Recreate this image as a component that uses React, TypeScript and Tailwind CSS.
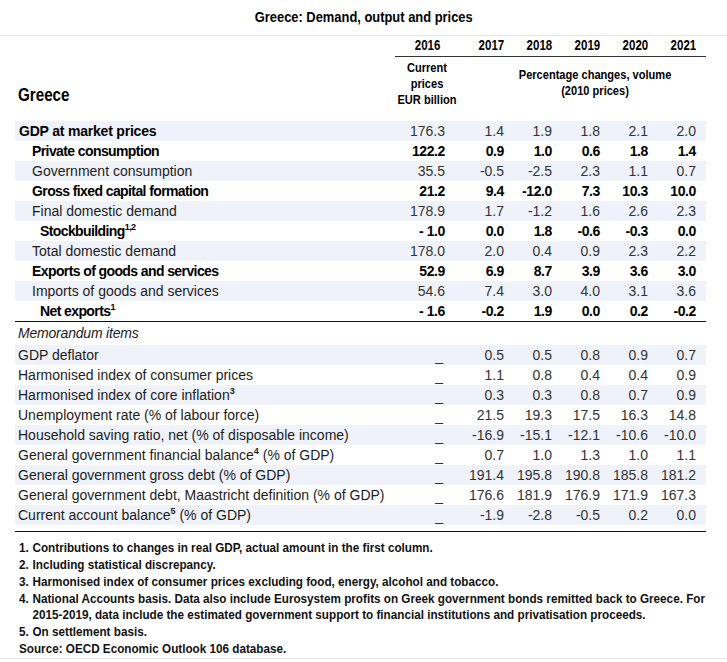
import React from "react";

type Row = {
  label: React.ReactNode;
  indent: number;
  bold?: boolean;
  heavy?: boolean;
  values: string[];
};

// Arial Narrow look: Liberation Sans bold, squeezed horizontally
const narrow = "[font-family:'Liberation_Sans',Arial,sans-serif] font-bold";
const body = "[font-family:'Liberation_Sans',Arial,sans-serif]";

const Squeeze = ({
  children,
  origin = "left",
  wide = false,
}: {
  children: React.ReactNode;
  origin?: "left" | "center";
  wide?: boolean;
}) => (
  <span
    className={`inline-block whitespace-nowrap ${wide ? "scale-x-[0.9]" : "scale-x-[0.82]"} ${
      origin === "left" ? "origin-left" : "origin-center"
    }`}
  >
    {children}
  </span>
);

const Sup = ({ children }: { children: React.ReactNode }) => (
  <sup className="relative -top-[6px] text-[9px] font-bold leading-none">{children}</sup>
);

const mainRows: Row[] = [
  { label: "GDP at market prices", indent: 4, bold: true, values: ["176.3", "1.4", "1.9", "1.8", "2.1", "2.0"] },
  { label: "Private consumption", indent: 17, heavy: true, values: ["122.2", "0.9", "1.0", "0.6", "1.8", "1.4"] },
  { label: "Government consumption", indent: 17, values: ["35.5", "-0.5", "-2.5", "2.3", "1.1", "0.7"] },
  { label: "Gross fixed capital formation", indent: 17, heavy: true, values: ["21.2", "9.4", "-12.0", "7.3", "10.3", "10.0"] },
  { label: "Final domestic demand", indent: 17, values: ["178.9", "1.7", "-1.2", "1.6", "2.6", "2.3"] },
  {
    label: (
      <>
        Stockbuilding<Sup>1,2</Sup>
      </>
    ),
    indent: 25,
    heavy: true,
    values: ["- 1.0", "0.0", "1.8", "-0.6", "-0.3", "0.0"],
  },
  { label: "Total domestic demand", indent: 17, values: ["178.0", "2.0", "0.4", "0.9", "2.3", "2.2"] },
  { label: "Exports of goods and services", indent: 17, heavy: true, values: ["52.9", "6.9", "8.7", "3.9", "3.6", "3.0"] },
  { label: "Imports of goods and services", indent: 17, values: ["54.6", "7.4", "3.0", "4.0", "3.1", "3.6"] },
  {
    label: (
      <>
        Net exports<Sup>1</Sup>
      </>
    ),
    indent: 25,
    heavy: true,
    values: ["- 1.6", "-0.2", "1.9", "0.0", "0.2", "-0.2"],
  },
];

const memoRows: Row[] = [
  { label: "GDP deflator", indent: 3, values: ["_", "0.5", "0.5", "0.8", "0.9", "0.7"] },
  { label: "Harmonised index of consumer prices", indent: 3, values: ["_", "1.1", "0.8", "0.4", "0.4", "0.9"] },
  {
    label: (
      <>
        Harmonised index of core inflation<Sup>3</Sup>
      </>
    ),
    indent: 3,
    values: ["_", "0.3", "0.3", "0.8", "0.7", "0.9"],
  },
  { label: "Unemployment rate (% of labour force)", indent: 3, values: ["_", "21.5", "19.3", "17.5", "16.3", "14.8"] },
  { label: "Household saving ratio, net (% of disposable income)", indent: 3, values: ["_", "-16.9", "-15.1", "-12.1", "-10.6", "-10.0"] },
  {
    label: (
      <>
        General government financial balance<Sup>4</Sup> (% of GDP)
      </>
    ),
    indent: 3,
    values: ["_", "0.7", "1.0", "1.3", "1.0", "1.1"],
  },
  { label: "General government gross debt (% of GDP)", indent: 3, values: ["_", "191.4", "195.8", "190.8", "185.8", "181.2"] },
  { label: "General government debt, Maastricht definition (% of GDP)", indent: 3, values: ["_", "176.6", "181.9", "176.9", "171.9", "167.3"] },
  {
    label: (
      <>
        Current account balance<Sup>5</Sup> (% of GDP)
      </>
    ),
    indent: 3,
    values: ["_", "-1.9", "-2.8", "-0.5", "0.2", "0.0"],
  },
];

const grid = "grid grid-cols-[383px_58px_48px_48px_48px_48px_48px] pr-[10px]";

function TableRow({ row, shaded }: { row: Row; shaded: boolean }) {
  const weight = row.heavy
    ? "font-bold tracking-[-0.6px] text-black"
    : row.bold
      ? "font-bold tracking-[-0.2px] text-black"
      : "text-[#1c1c1c]";
  return (
    <div className={`${grid} h-[20px] items-center text-[14px] leading-[20px] ${shaded ? "bg-[#eff2f9]" : ""}`}>
      <div className={`whitespace-nowrap ${weight}`} style={{ paddingLeft: row.indent }}>
        {row.label}
      </div>
      {row.values.map((v, i) => (
        <div
          key={i}
          className={`text-right whitespace-nowrap ${i === 0 ? "pr-[11px]" : ""} ${
            row.heavy ? "font-bold tracking-[-0.4px] text-black" : "text-[#333]"
          } ${v === "_" ? "relative top-[1px] pr-[13px]" : ""}`}
        >
          {v}
        </div>
      ))}
    </div>
  );
}

const footnotes: React.ReactNode[] = [
  "Contributions to changes in real GDP, actual amount in the first column.",
  "Including statistical discrepancy.",
  "Harmonised index of consumer prices excluding food, energy, alcohol and tobacco.",
  <>
    National Accounts basis. Data also include Eurosystem profits on Greek government bonds remitted back to Greece. For
    <br />
    2015-2019, data include the estimated government support to financial institutions and privatisation proceeds.
  </>,
  "On settlement basis.",
];

export default function App() {
  return (
    <div className={`w-[727px] h-[662px] overflow-hidden bg-white text-black ${body}`}>
      <div className={`h-[36px] pt-[9px] border-b border-[#e6e6e6] flex justify-center text-[15px] leading-[16px] ${narrow}`}>
        <span className="inline-block whitespace-nowrap scale-x-[0.86] origin-center">
          Greece: Demand, output and prices
        </span>
      </div>

      <div className="px-[15px]">
        <div className="w-[691px]">
          {/* header */}
          <div className={`${grid} pt-[1px] h-[17px] text-[14px] leading-[16px] ${narrow}`}>
            <div />
            <div className="flex justify-center pl-[1px]">
              <Squeeze origin="center">2016</Squeeze>
            </div>
            {["2017", "2018", "2019", "2020", "2021"].map((y) => (
              <div key={y} className="flex justify-end">
                <span className="inline-block scale-x-[0.82] origin-right">{y}</span>
              </div>
            ))}
          </div>
          <div className="ml-[380px] mt-[3px] border-t border-[#333]" />
          <div className={`grid grid-cols-[383px_58px_250px] h-[64px] ${narrow}`}>
            <div className="flex items-end pb-[16px] pl-[3px] text-[18.5px] leading-[20px]">
              <Squeeze>Greece</Squeeze>
            </div>
            <div className="pt-[3px] flex justify-center text-center text-[13.5px] leading-[16px]">
              <Squeeze origin="center">
                Current
                <br />
                prices
                <br />
                EUR billion
              </Squeeze>
            </div>
            <div className="pt-[10px] pl-[28px] flex justify-center text-center text-[13.5px] leading-[16px]">
              <Squeeze origin="center">
                Percentage changes, volume
                <br />
                (2010 prices)
              </Squeeze>
            </div>
          </div>

          {/* main rows */}
          <div className="border-b border-[#111]">
            {mainRows.map((r, i) => (
              <TableRow key={i} row={r} shaded={i % 2 === 0} />
            ))}
          </div>

          <div className="h-[23px] flex items-center pl-[3px] text-[14px] italic text-[#1c1c1c] tracking-[-0.2px]">
            Memorandum items
          </div>
          <div className="pb-[6px] border-b border-[#111]">
            {memoRows.map((r, i) => (
              <TableRow key={i} row={r} shaded={i % 2 === 0} />
            ))}
          </div>
        </div>
      </div>

      <div className={`pt-[8px] pb-[1px] border-b border-[#e6e6e6] text-[13px] leading-[16px] text-[#111] ${narrow}`}>
        {footnotes.map((f, i) => (
          <div key={i} className="mb-[1px] pl-[19px]">
            <Squeeze wide>
              <span className="inline-block w-[15px]">{i + 1}.</span>
              {i === 3 ? <span className="inline-block align-top">{f}</span> : f}
            </Squeeze>
          </div>
        ))}
        <div className="pl-[19px] h-[16px]">
          <Squeeze wide>Source: OECD Economic Outlook 106 database.</Squeeze>
        </div>
      </div>
    </div>
  );
}
